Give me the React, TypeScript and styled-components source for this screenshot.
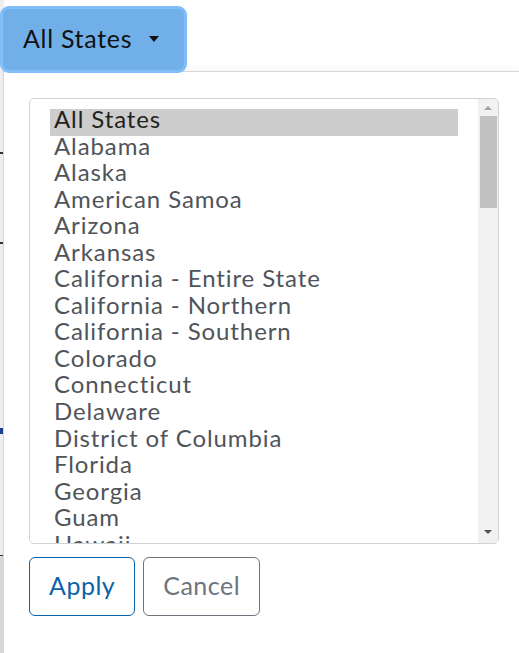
import React from 'react';
import styled, { createGlobalStyle } from 'styled-components';

const GlobalStyle = createGlobalStyle`
  html, body {
    margin: 0;
    padding: 0;
    background: #fff;
  }
  body {
    font-family: Lato, "Noto Sans", "Liberation Sans", sans-serif;
  }
`;

const STATES = [
  'All States',
  'Alabama',
  'Alaska',
  'American Samoa',
  'Arizona',
  'Arkansas',
  'California - Entire State',
  'California - Northern',
  'California - Southern',
  'Colorado',
  'Connecticut',
  'Delaware',
  'District of Columbia',
  'Florida',
  'Georgia',
  'Guam',
  'Hawaii',
];

const Page = styled.div`
  position: relative;
  width: 519px;
  height: 653px;
  overflow: hidden;
`;

// page content peeking out on the left edge, behind the dropdown
const Rail = styled.div`
  width: 4px;
  height: 100%;
  display: flex;
  flex-direction: column;
  background: #eeeeee;
`;

const RailMark = styled.div<{ $top: number; $color?: string; $h?: number }>`
  margin-top: ${(p) => p.$top}px;
  height: ${(p) => p.$h ?? 2}px;
  background: ${(p) => p.$color ?? '#333'};
`;

const RailLower = styled.div`
  flex: 1;
  background: #d8d8d8;
  border-top: 1px solid #333;
`;

const Dropdown = styled.div`
  position: absolute;
  inset: 0;
  display: flex;
  flex-direction: column;
`;

const Toggle = styled.button`
  align-self: flex-start;
  margin-top: 6px;
  height: 67px;
  width: 187px;
  padding: 0 0 3px 20px;
  display: flex;
  align-items: center;
  gap: 17px;
  font-family: inherit;
  font-size: 25px;
  letter-spacing: 0.7px;
  color: #111;
  background: #70afe7;
  border: 3px solid #80bdf9;
  border-radius: 9px;
  position: relative;
  z-index: 2;
`;

const Caret = styled.span`
  width: 0;
  height: 0;
  border-left: 5px solid transparent;
  border-right: 5px solid transparent;
  border-top: 6px solid #111;
  margin-top: 2px;
`;

const Panel = styled.div`
  flex: 1;
  margin-top: -2px;
  margin-left: 3px;
  background: #fff;
  border-left: 1px solid #d6d6d6;
  border-top: 1px solid #d6d6d6;
  box-shadow: 0 -3px 6px rgba(0, 0, 0, 0.03);
  padding: 26px 0 0 25px;
  display: flex;
  flex-direction: column;
  gap: 13px;
`;

const ListBox = styled.div`
  width: 468px;
  height: 444px;
  border: 1px solid #cfd3d7;
  border-radius: 5px;
  display: flex;
  overflow: hidden;
`;

const Options = styled.div`
  flex: 1;
  padding: 7px 20px 0 20px;
  overflow: hidden;
`;

// the highlight sits 3px below the line box, as the reference font rides high
const Option = styled.div<{ $selected?: boolean }>`
  height: 26.55px;
  line-height: 26.55px;
  padding-left: 4px;
  font-size: 24px;
  letter-spacing: 0.9px;
  color: ${(p) => (p.$selected ? '#222' : '#4f545a')};
  white-space: nowrap;
  ${(p) =>
    p.$selected &&
    `
    background: linear-gradient(#cdcdcd, #cdcdcd) 0 3px / 100% 100% no-repeat;
    box-shadow: 0 3px 0 #cdcdcd;
  `}
`;

const Scrollbar = styled.div`
  width: 20px;
  background: #f1f1f1;
  display: flex;
  flex-direction: column;
  align-items: center;
`;

const Arrow = styled.div<{ $down?: boolean }>`
  width: 0;
  height: 0;
  margin: ${(p) => (p.$down ? 'auto 0 9px' : '7px 0 6px')};
  border-left: 4px solid transparent;
  border-right: 4px solid transparent;
  ${(p) =>
    p.$down ? 'border-top: 4px solid #505050;' : 'border-bottom: 4px solid #a3a3a3;'}
`;

const Thumb = styled.div`
  width: 17px;
  height: 92px;
  background: #c1c1c1;
`;

const Actions = styled.div`
  display: flex;
  gap: 8px;
`;

const ActionButton = styled.button<{ $variant: 'primary' | 'secondary' }>`
  height: 59px;
  padding: 0 19px 3px;
  font-family: inherit;
  font-size: 25px;
  letter-spacing: 0.5px;
  background: #fff;
  border-radius: 6px;
  color: ${(p) => (p.$variant === 'primary' ? '#0b63a9' : '#6c757d')};
  border: 1px solid ${(p) => (p.$variant === 'primary' ? '#0b63a9' : '#6c757d')};
`;

const App: React.FC = () => {
  return (
    <>
      <GlobalStyle />
      <Page>
        <Rail>
          <RailMark $top={152} />
          <RailMark $top={88} />
          <RailMark $top={184} $h={6} $color="#1d3f9a" />
          <div style={{ flex: '0 0 121px' }} />
          <RailLower />
        </Rail>

        <Dropdown>
          <Toggle>
            All States
            <Caret />
          </Toggle>
          <Panel>
            <ListBox>
              <Options>
                {STATES.map((s, i) => (
                  <Option key={s} $selected={i === 0}>
                    {s}
                  </Option>
                ))}
              </Options>
              <Scrollbar>
                <Arrow />
                <Thumb />
                <Arrow $down />
              </Scrollbar>
            </ListBox>
            <Actions>
              <ActionButton $variant="primary">Apply</ActionButton>
              <ActionButton $variant="secondary">Cancel</ActionButton>
            </Actions>
          </Panel>
        </Dropdown>
      </Page>
    </>
  );
};

export default App;
